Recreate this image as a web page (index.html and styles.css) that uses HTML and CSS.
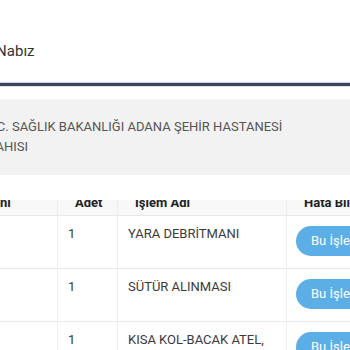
FILE: index.html
```html
<!DOCTYPE html>
<html lang="tr">
<head>
<meta charset="utf-8">
<link rel="stylesheet" href="styles.css">
</head>
<body>
<div class="page">
  <header class="topbar">
    <div class="brand">e-Nabız</div>
  </header>
  <div class="rule"></div>
  <section class="hospital">
    <p class="hospital-name">T.C. SAĞLIK BAKANLIĞI ADANA ŞEHİR HASTANESİ DAHISI</p>
  </section>
  <div class="table">
    <div class="thead">
      <div class="th"><span class="th-label">Tanı</span></div>
      <div class="th"><span class="th-label">Adet</span></div>
      <div class="th"><span class="th-label">İşlem Adı</span></div>
      <div class="th"><span class="th-label">Hata Bildir</span></div>
    </div>
    <div class="tr">
      <div class="td"></div>
      <div class="td">1</div>
      <div class="td">YARA DEBRİTMANI</div>
      <div class="td td-action"><span class="btn">Bu İşlemi Bildir</span></div>
    </div>
    <div class="tr">
      <div class="td"></div>
      <div class="td">1</div>
      <div class="td">SÜTÜR ALINMASI</div>
      <div class="td td-action"><span class="btn">Bu İşlemi Bildir</span></div>
    </div>
    <div class="tr">
      <div class="td"></div>
      <div class="td">1</div>
      <div class="td">KISA KOL-BACAK ATEL, ALÇI</div>
      <div class="td td-action"><span class="btn">Bu İşlemi Bildir</span></div>
    </div>
  </div>
</div>
</body>
</html>
```
FILE: styles.css
```css
* { box-sizing: border-box; }
html, body { margin: 0; padding: 0; background: #fff; }
body {
  width: 350px;
  height: 350px;
  overflow: hidden;
  font-family: Roboto, "Noto Sans", sans-serif;
  color: #333;
}
.page { width: 350px; }
.topbar {
  height: 82px;
  display: flex;
  align-items: center;
  padding-top: 20px;
}
.brand {
  margin-left: -16px;
  font-size: 15px;
  color: #333;
  white-space: nowrap;
}
.rule {
  height: 5px;
  border-top: 1px solid #c9d1dc;
  border-bottom: 1px solid #dde3ea;
  background: #3a475a;
}
.hospital {
  margin-top: 12px;
  background: #f2f2f2;
  height: 76px;
  padding-top: 18px;
  overflow: hidden;
}
.hospital-name {
  margin: 0 0 0 -13px;
  width: 300px;
  font-size: 13px;
  line-height: 20px;
  color: #555;
}
.table {
  margin-top: 25px;
  margin-left: -31px;
  width: 440px;
}
.thead, .tr {
  display: grid;
  grid-template-columns: 89px 60px 169px 122px;
}
.thead {
  height: 15px;
  background: #f8f8f8;
  overflow: hidden;
}
.th {
  padding-left: 17px;
  border-right: 1px solid #ededed;
  white-space: nowrap;
  overflow: hidden;
}
.th-label {
  display: block;
  margin-top: -4px;
  font-size: 13px;
  font-weight: 700;
  line-height: 13px;
  color: #222;
}
.tr {
  height: 53px;
  border-top: 1px solid #e8e8e8;
}
.td {
  padding: 8px 10px 0;
  font-size: 13px;
  line-height: 20px;
  color: #3a3a3a;
  border-right: 1px solid #ededed;
  overflow: hidden;
}
.td-action { padding: 10px 0 0 9px; }
.btn {
  display: inline-block;
  height: 30px;
  line-height: 30px;
  padding: 0 15px;
  border-radius: 15px;
  background: #5caee6;
  color: #fff;
  font-size: 13px;
  white-space: nowrap;
}
```
